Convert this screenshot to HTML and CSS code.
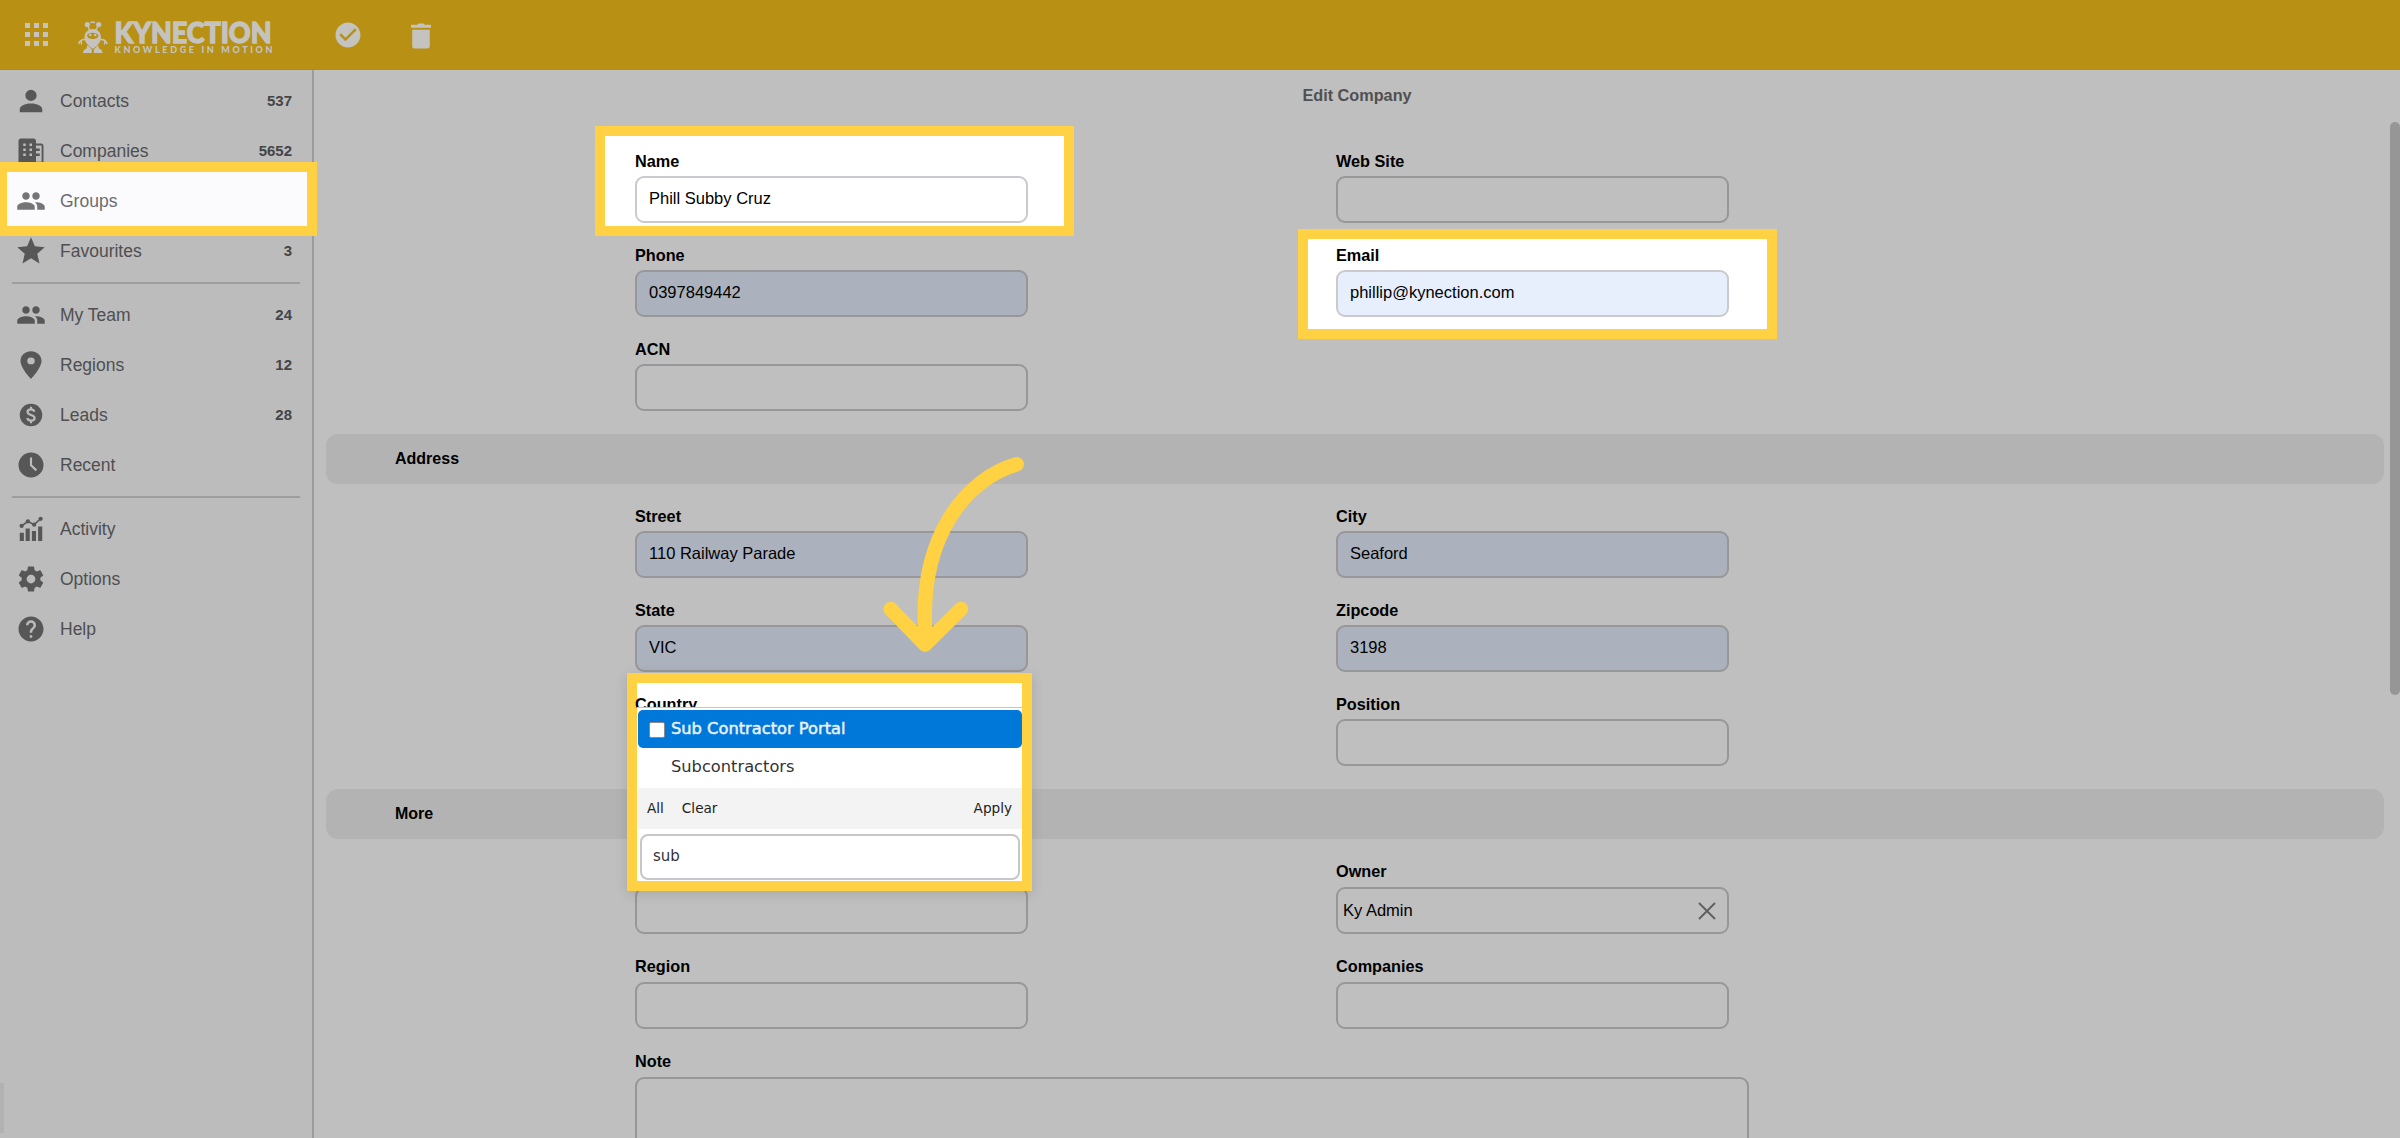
FILE: index.html
```html
<!DOCTYPE html>
<html lang="en">
<head>
<meta charset="utf-8">
<title>Edit Company</title>
<link rel="stylesheet" href="styles.css">
</head>
<body>
<header class="topbar">
  <svg class="apps" viewBox="0 0 24 24"><path d="M0 0h5v5H0zM9 0h5v5H9zM18 0h5v5h-5zM0 9h5v5H0zM9 9h5v5H9zM18 9h5v5h-5zM0 18h5v5H0zM9 18h5v5H9zM18 18h5v5h-5z"/></svg>
  <svg class="logo" viewBox="0 0 196 34">
    <g fill="none" stroke="#c5c3bf" stroke-width="1.5" stroke-linecap="round">
      <path d="M10.500 4L12.700 9.500M21.500 4L18.500 9.500M14 1.500Q15.800 .6 17.500 1.500M7.500 18.500Q3 18.500 1.800 22.500M24 18.500Q28.500 18.500 30 22.500M4 20L4.500 23M28 20L27.500 23"/>
    </g>
    <g fill="#c5c3bf">
      <circle cx="10.300" cy="3.500" r="2.600"/><circle cx="21.700" cy="3.500" r="2.600"/>
      <path fill-rule="evenodd" d="M15.800 8C20.500 8 24 11.500 24 16.500C24 21.500 20 24.500 15.800 28C11.600 24.500 7.500 21.500 7.500 16.500C7.500 11.500 11 8 15.800 8ZM10 14.500C10.500 19.300 21 19.300 21.500 14.500C20.500 10.800 11 10.800 10 14.500Z"/>
      <circle cx="13.300" cy="14" r="1.300"/><circle cx="18.200" cy="14" r="1.300"/>
      <path d="M10.500 24L14.800 28.500V32H6Q6 28.500 9.500 27.500ZM21 24L16.800 28.500V32H25.500Q25.500 28.500 22 27.500Z"/>
    </g>
    <text class="brand" x="37.500" y="21.500" textLength="157" lengthAdjust="spacingAndGlyphs">KYNECTION</text>
    <text class="tagline" x="37.500" y="31.700" textLength="158" lengthAdjust="spacing">KNOWLEDGE IN MOTION</text>
  </svg>
  <svg class="act done" viewBox="0 0 24 24"><path d="M12 2C6.500 2 2 6.500 2 12s4.500 10 10 10 10-4.500 10-10S17.500 2 12 2m-2 15l-5-5 1.410-1.410L10 14.170l7.590-7.590L19 8z"/></svg>
  <svg class="act" viewBox="0 0 24 24"><path d="M4 3h5l1-1h4l1 1h5v2.300H4zM5 7h14v13a2 2 0 0 1-2 2H7a2 2 0 0 1-2-2z"/></svg>
</header>
<div class="body">
  <nav class="side">
    <a class="item"><svg viewBox="0 0 24 24"><path d="M12 3a4.500 4.500 0 1 1 0 9 4.500 4.500 0 0 1 0-9M12 14c5 0 9 2 9 4.700V21H3v-2.300C3 16 7 14 12 14"/></svg><span>Contacts</span><b>537</b></a>
    <a class="item"><svg viewBox="0 0 24 24"><path fill-rule="evenodd" d="M4 2h10a2 2 0 0 1 2 2v2h4a2 2 0 0 1 2 2v14H2V4a2 2 0 0 1 2-2M5.800 6v2h2V6zm5 0v2h2V6zm-5 4v2h2v-2zm5 0v2h2v-2zm-5 4v2h2v-2zm5 0v2h2v-2zM16 7.500v2.500h3v2h-3v2h3v2h-3v4.500h4.500v-13z"/></svg><span>Companies</span><b>5652</b></a>
    <a class="item lit"><svg viewBox="0 0 24 24"><path d="M16 11c1.660 0 2.990-1.340 2.990-3S17.660 5 16 5s-3 1.340-3 3 1.340 3 3 3m-8 0c1.660 0 2.990-1.340 2.990-3S9.660 5 8 5 5 6.340 5 8s1.340 3 3 3m0 2c-2.330 0-7 1.170-7 3.500V19h14v-2.500c0-2.330-4.670-3.500-7-3.500m8 0c-.29 0-.62.020-.97.050 1.160.84 1.970 1.970 1.970 3.450V19h6v-2.500c0-2.330-4.670-3.500-7-3.500"/></svg><span>Groups</span></a>
    <a class="item"><svg viewBox="0 0 24 24"><path transform="translate(-1.200 -1.200) scale(1.100)" d="M12 17.270L18.180 21l-1.640-7.030L22 9.240l-7.190-.61L12 2 9.190 8.630 2 9.240l5.460 4.730L5.820 21z"/></svg><span>Favourites</span><b>3</b></a>
    <hr>
    <a class="item"><svg viewBox="0 0 24 24"><path d="M16 11c1.660 0 2.990-1.340 2.990-3S17.660 5 16 5s-3 1.340-3 3 1.340 3 3 3m-8 0c1.660 0 2.990-1.340 2.990-3S9.660 5 8 5 5 6.340 5 8s1.340 3 3 3m0 2c-2.330 0-7 1.170-7 3.500V19h14v-2.500c0-2.330-4.670-3.500-7-3.500m8 0c-.29 0-.62.020-.97.050 1.160.84 1.970 1.970 1.970 3.450V19h6v-2.500c0-2.330-4.670-3.500-7-3.500"/></svg><span>My Team</span><b>24</b></a>
    <a class="item"><svg viewBox="0 0 24 24"><path transform="translate(-2.400 -1.200) scale(1.200 1.100)" d="M12 2C8.130 2 5 5.130 5 9c0 5.250 7 13 7 13s7-7.750 7-13c0-3.870-3.130-7-7-7m0 9.500a2.500 2.500 0 0 1 0-5 2.500 2.500 0 0 1 0 5"/></svg><span>Regions</span><b>12</b></a>
    <a class="item"><svg viewBox="0 0 24 24"><circle cx="12" cy="12" r="9"/><path class="cut" d="M14.800 9.300C14.300 7.900 13.200 7.500 12 7.500c-1.600 0-2.800.8-2.800 2.100 0 3 5.700 1.700 5.700 4.700 0 1.400-1.300 2.200-2.900 2.200-1.500 0-2.700-.6-3-2.100M12 5.400v2M12 16.500v2.100"/></svg><span>Leads</span><b>28</b></a>
    <a class="item"><svg viewBox="0 0 24 24"><circle cx="12" cy="12" r="10"/><path class="cut" d="M12 6v6.300l4.300 4"/></svg><span>Recent</span></a>
    <hr>
    <a class="item"><svg viewBox="0 0 24 24"><path d="M3 15h3.300v6.500H3zM7.700 11.500H11v10H7.700zM12.700 13.500H16v8h-3.300zM17.700 10H21v11.500h-3.300z"/><path class="line" d="M4.500 9.500L9.500 6L14.500 8.500L19.500 4"/><circle cx="4.500" cy="9.500" r="1.700"/><circle cx="9.500" cy="5.800" r="1.700"/><circle cx="14.500" cy="8.500" r="1.700"/><circle cx="19.700" cy="3.800" r="1.700"/></svg><span>Activity</span></a>
    <a class="item"><svg viewBox="0 0 24 24"><path d="M12 15.500A3.500 3.500 0 0 1 8.500 12 3.500 3.500 0 0 1 12 8.500a3.500 3.500 0 0 1 3.500 3.500 3.500 3.500 0 0 1-3.500 3.500m7.430-2.530c.04-.32.070-.64.070-.97s-.03-.66-.07-1l2.110-1.630c.19-.15.240-.42.120-.64l-2-3.460c-.12-.22-.39-.31-.61-.22l-2.490 1c-.52-.39-1.060-.73-1.690-.98l-.37-2.650A.506.506 0 0 0 14 2h-4c-.25 0-.46.180-.5.420l-.37 2.650c-.63.250-1.170.590-1.690.980l-2.490-1c-.22-.09-.49 0-.61.220l-2 3.460c-.13.220-.07.490.120.640L4.570 11c-.04.340-.07.670-.07 1s.03.650.07.970l-2.110 1.660c-.19.150-.25.420-.12.640l2 3.460c.12.220.39.300.61.220l2.490-1.010c.52.400 1.060.740 1.690.990l.37 2.650c.04.240.25.420.5.420h4c.25 0 .46-.18.500-.42l.37-2.650c.63-.26 1.170-.59 1.690-.99l2.490 1.010c.22.080.49 0 .61-.22l2-3.460c.12-.22.070-.49-.12-.64z"/></svg><span>Options</span></a>
    <a class="item"><svg viewBox="0 0 24 24"><path d="M12 2C6.480 2 2 6.480 2 12s4.480 10 10 10 10-4.480 10-10S17.520 2 12 2m1 17h-2v-2h2zm2.070-7.750l-.9.920C13.450 12.900 13 13.500 13 15h-2v-.5c0-1.100.45-2.100 1.170-2.830l1.240-1.260c.37-.36.590-.86.590-1.410a2 2 0 0 0-4 0H8a4 4 0 0 1 8 0c0 .88-.36 1.680-.93 2.250"/></svg><span>Help</span></a>
    <div class="handle"></div>
  </nav>
  <main class="main">
    <h1>Edit Company</h1>
    <section class="grid first">
      <label class="field lit"><span>Name</span><div class="box">Phill Subby Cruz</div></label>
      <label class="field"><span>Web Site</span><div class="box"></div></label>
      <label class="field"><span>Phone</span><div class="box fill">0397849442</div></label>
      <label class="field lit"><span>Email</span><div class="box fill">phillip@kynection.com</div></label>
      <label class="field"><span>ACN</span><div class="box"></div></label>
    </section>
    <h2>Address</h2>
    <section class="grid">
      <label class="field"><span>Street</span><div class="box fill">110 Railway Parade</div></label>
      <label class="field"><span>City</span><div class="box fill">Seaford</div></label>
      <label class="field"><span>State</span><div class="box fill">VIC</div></label>
      <label class="field"><span>Zipcode</span><div class="box fill">3198</div></label>
      <label class="field lit-label"><span>Country</span><div class="box"></div></label>
      <label class="field"><span>Position</span><div class="box"></div></label>
    </section>
    <h2>More</h2>
    <section class="grid more">
      <label class="field"><span></span><div class="box"></div></label>
      <label class="field"><span>Owner</span><div class="box owner">Ky Admin<svg viewBox="0 0 16 16"><path d="M0 0L16 16M16 0L0 16"/></svg></div></label>
      <label class="field"><span>Region</span><div class="box"></div></label>
      <label class="field"><span>Companies</span><div class="box"></div></label>
      <label class="field wide"><span>Note</span><div class="box note"></div></label>
    </section>
  </main>
</div>
<div class="scroll"></div>
<div class="spot spot-groups"></div>
<div class="spot spot-name"></div>
<div class="spot spot-email"></div>
<div class="spot spot-menu"></div>
<div class="menu">
  <div class="opt on"><i></i>Sub Contractor Portal</div>
  <div class="opt">Subcontractors</div>
  <div class="acts"><span>All</span><span>Clear</span><span class="apply">Apply</span></div>
  <div class="search">sub</div>
</div>
<svg class="arrow" viewBox="870 440 170 220"><path d="M1016.700 464.300C968 478 916 536 926 642M890.700 609L925 644.500L961 609"/></svg>
</body>
</html>
```
FILE: styles.css
```css
* { box-sizing: border-box; }
body {
  margin: 0; width: 2400px; height: 1138px; overflow: hidden; position: relative;
  background: #bfbfbf; color: #000;
  font-family: "Liberation Sans", Arial, sans-serif; font-size: 16.5px;
}
.topbar {
  height: 70px; background: #b89013; border-bottom: 1px solid #a38b4a;
  display: flex; align-items: center; padding-left: 25px;
}
.topbar svg { fill: #c5c3bf; flex: none; }
.apps { width: 24px; height: 24px; }
.logo { width: 196px; height: 34px; margin-left: 28px; margin-top: 7px; overflow: visible; }
.brand { font: 900 28.5px Lato, sans-serif; stroke: #c5c3bf; stroke-width: 1.3px; }
.tagline { font: 900 9px Lato, sans-serif; }
.act { width: 30px; height: 30px; margin-left: 43px; margin-top: 3px; }
.done { margin-left: 60px; margin-top: 1px; }
.body { display: flex; height: 1068px; }
.side {
  width: 314px; flex: none; padding-top: 6px; color: #4f4f51;
  background: #bcbcbc; border-right: 2px solid #9c9c9c;
  display: flex; flex-direction: column;
}
.item { display: flex; align-items: center; height: 50px; flex: none; padding: 0 20px 0 16px; font-size: 17.5px; }
.item svg { width: 30px; height: 30px; margin-right: 14px; fill: #575757; }
.item b { margin-left: auto; font-size: 15px; line-height: 18px; padding-bottom: 1px; color: #454547; }
.cut { fill: none; stroke: #bcbcbc; stroke-width: 1.700; }
.line { fill: none; stroke: #575757; stroke-width: 1.300; }
.item.lit { position: relative; z-index: 2; color: #6c6c6e; }
.item.lit svg { fill: #757575; }
.side hr { border: 0; height: 2px; flex: none; background: #9e9e9e; margin: 6px 12px; }
.handle { width: 4px; height: 50px; margin-top: auto; margin-bottom: 5px; background: #b2b2b2; }
.main { flex: 1; padding: 0 16px 0 12px; }
h1 { margin: 0; height: 75px; padding: 15px 0 0 4px; font-size: 16.25px; line-height: 20px; text-align: center; color: #505050; }
h2 {
  margin: 0; height: 50px; line-height: 50px; border-radius: 12px; background: #b3b3b3;
  padding-left: 69px; font-size: 16px;
}
.grid {
  display: grid; grid-template-columns: 393px 393px; column-gap: 308px; row-gap: 0;
  grid-auto-rows: 94px; padding-left: 309px; height: 305px; padding-top: 17px;
}
.first { height: 289px; padding-top: 1px; }
.more { grid-auto-rows: 95px; padding-top: 18px; }
.field { display: block; }
.field span { display: block; height: 30px; line-height: 30px; font-weight: bold; font-size: 16.25px; }
.more .field span { line-height: 29px; }
.field.lit span, .field.lit .box, .lit-label span { position: relative; z-index: 2; }
.box {
  height: 47px; border: 2px solid #97979a; border-radius: 9px; padding: 0 0 2px 12px;
  display: flex; align-items: center;
}
.fill { background: #abb2be; }
.lit .box { background: #fff; border-color: #c9c9ce; }
.lit .fill { background: #e7effd; }
.owner { padding: 0 12px 0 5px; justify-content: space-between; }
.owner svg { width: 16px; height: 16px; overflow: visible; fill: none; stroke: #5e5e5e; stroke-width: 1.800; }
.wide { grid-column: 1 / 3; width: 1114px; }
.note { height: 90px; }
.scroll { position: absolute; right: 0; top: 122px; width: 10px; height: 573px; border-radius: 5px; background: #969696; }
.spot { position: absolute; z-index: 1; border: 10px solid #ffd143; background: #fff; }
.spot-groups { left: -3px; top: 162px; width: 320px; height: 74px; background: #fbfbfe; }
.spot-name { left: 595px; top: 126px; width: 479px; height: 110px; }
.spot-email { left: 1298px; top: 229px; width: 479px; height: 110px; }
.spot-menu { left: 627px; top: 673px; width: 405px; height: 218px; box-shadow: 0 3px 12px rgba(0, 0, 0, .12); }
.menu {
  position: absolute; z-index: 3; left: 637px; top: 707px; width: 385px; height: 174px;
  background: #fff; border-top: 1px solid #c4c4c8; padding: 2px 0 0 1px;
  font: 16.25px "DejaVu Sans", sans-serif; color: #333;
}
.opt { height: 38px; padding: 0 0 2px 33px; display: flex; align-items: center; }
.on { background: #0078d9; color: #e6f2ff; border-radius: 5px; padding-left: 11px; -webkit-text-stroke: .5px #e6f2ff; }
.on i { width: 16px; height: 16px; margin-right: 6px; background: #fff; border: 1px solid #8a8a8a; border-radius: 2px; position: relative; top: 2px; }
.acts { height: 41px; margin-top: 2px; background: #f3f3f3; display: flex; align-items: center; gap: 18px; padding: 0 10px 1px 9px; font-size: 13.6px; color: #222; }
.apply { margin-left: auto; }
.search { height: 46px; margin: 5px 2px 0; border: 2px solid #c6c6cb; border-radius: 8px; padding-left: 11px; line-height: 41px; font-size: 15px; }
.arrow { position: absolute; z-index: 4; left: 870px; top: 440px; width: 170px; height: 220px; fill: none; stroke: #ffd143; stroke-width: 14.500; stroke-linecap: round; stroke-linejoin: round; }
```
